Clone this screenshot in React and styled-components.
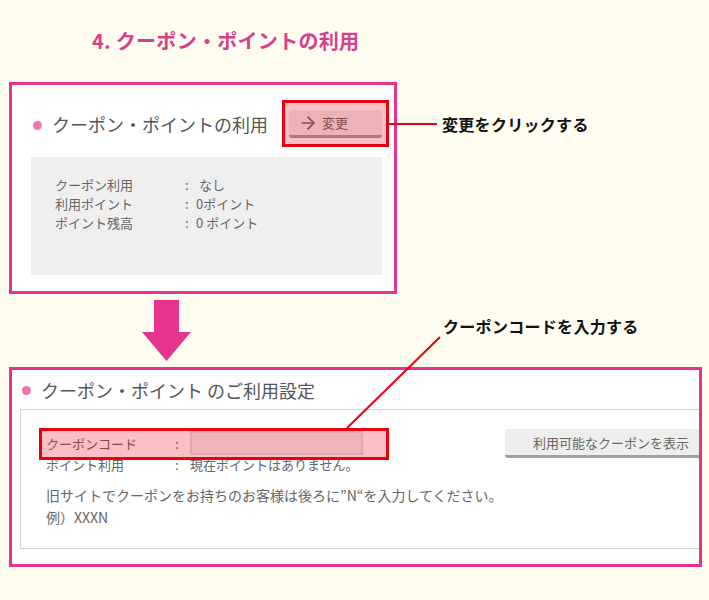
import styled, { createGlobalStyle } from 'styled-components'
import { ArrowRight } from 'lucide-react'

const PINK = '#E6338B'
const RED = '#E60012'

const GlobalStyle = createGlobalStyle`
  html, body {
    margin: 0;
    padding: 0;
    background: #FFFDEF;
  }
  body {
    font-family: "Noto Sans CJK JP", "Noto Sans", sans-serif;
    color: #555;
  }
`

const Page = styled.div`
  position: relative;
  width: 709px;
  height: 600px;
  padding-top: 29px;
  box-sizing: border-box;
`

const Title = styled.h2`
  margin: 0 0 29px 92px;
  font-size: 20px;
  line-height: 24px;
  font-weight: 700;
  letter-spacing: 0.3px;
  color: #D63F8C;
`

const Row = styled.div`
  display: flex;
  align-items: flex-start;
`

const Frame = styled.section`
  box-sizing: border-box;
  flex-shrink: 0;
  width: ${p => p.$w}px;
  height: ${p => p.$h}px;
  margin-left: 9px;
  border: 3px solid ${PINK};
  background: #fff;
  overflow: hidden;
`

const FirstFrame = styled(Frame)`
  padding: 25px 12px 0 19px;
`

const SecondFrame = styled(Frame)`
  padding: 0 0 0 8px;
`

const Head = styled.div`
  display: flex;
  align-items: center;
  height: ${p => p.$h}px;
  padding-left: 2px;
`

const Dot = styled.span`
  flex-shrink: 0;
  width: 9px;
  height: 9px;
  margin: 2px 10px 0 0;
  border-radius: 50%;
  background: #F074AE;
`

const HeadText = styled.h3`
  margin: 0;
  font-size: 18px;
  line-height: 24px;
  font-weight: 400;
  color: #555;
  white-space: nowrap;
`

const Callout = styled.div`
  margin-left: ${p => p.$left}px;
  margin-top: ${p => p.$top}px;
  font-size: 16px;
  line-height: 22px;
  font-weight: 700;
  letter-spacing: 0.3px;
  color: #111;
  white-space: nowrap;
`

/* red translucent marker drawn over the thing to click */
const Marker = styled.span`
  position: absolute;
  z-index: 1;
  box-sizing: border-box;
  top: ${p => p.$top}px;
  left: ${p => p.$left}px;
  width: ${p => p.$w}px;
  height: ${p => p.$h}px;
  border: 3px solid ${RED};
  background: rgba(230, 0, 18, 0.25);
  pointer-events: none;
`

const ButtonWrap = styled.div`
  position: relative;
  margin-left: auto;
  display: flex;
`

const GreyButton = styled.button`
  display: flex;
  align-items: center;
  justify-content: ${p => (p.$center ? 'center' : 'flex-start')};
  gap: 4px;
  box-sizing: border-box;
  width: ${p => p.$w}px;
  height: ${p => p.$h}px;
  padding: 0 0 0 ${p => (p.$center ? 0 : 9)}px;
  margin: 0;
  border: none;
  border-bottom: 3px solid #A0A0A0;
  border-radius: 3px;
  background: #EEEEEE;
  color: #666;
  font-family: inherit;
  font-size: 13px;
  line-height: 19px;
  flex-shrink: 0;
`

const InfoPanel = styled.div`
  box-sizing: border-box;
  height: 118px;
  margin-top: 19px;
  padding: 18px 0 0 24px;
  background: #EFEFEF;
`

const InfoRow = styled.div`
  display: grid;
  grid-template-columns: 130px 11px 1fr;
  font-size: 13px;
  line-height: 19px;
  color: #666;
`

const FormPanel = styled.div`
  box-sizing: border-box;
  display: flex;
  align-items: flex-start;
  width: 700px;
  height: 140px;
  padding: 21px 0 0 25px;
  border: 1px solid #D3D3D3;
`

const FormCol = styled.div`
  width: 459px;
  flex-shrink: 0;
`

const FormRow = styled.div`
  position: relative;
  display: grid;
  grid-template-columns: 129px 15px 1fr;
  align-items: center;
  height: ${p => p.$h}px;
  font-size: 13px;
  line-height: 19px;
  color: #666;
`

const CodeInput = styled.input`
  box-sizing: border-box;
  width: 173px;
  height: 24px;
  margin: 0;
  border: 2px solid #DEDEDE;
  background: #F2F2F2;
`

const Note = styled.p`
  margin: 10px 0 0;
  font-size: 14px;
  line-height: 22px;
  color: #666;
`

const SideButton = styled(GreyButton)`
  margin-top: -2px;
`

const Lines = styled.svg`
  position: absolute;
  top: 0;
  left: 0;
  z-index: 2;
  pointer-events: none;
`

function DownArrow() {
  return (
    <svg width="49" height="61" viewBox="0 0 49 61" style={{ marginLeft: 142, marginTop: 6, flexShrink: 0 }}>
      <polygon points="12,0 37,0 37,32 49,32 24.5,61 0,32 12,32" fill={PINK} />
    </svg>
  )
}

const current = [
  ['クーポン利用', '\u00a0なし'],
  ['利用ポイント', '0ポイント'],
  ['ポイント残高', '0 ポイント'],
]

export default function App() {
  return (
    <Page>
      <GlobalStyle />
      <Title>4. クーポン・ポイントの利用</Title>

      <Row>
        <FirstFrame $w={388} $h={212}>
          <Head $h={28}>
            <Dot />
            <HeadText>クーポン・ポイントの利用</HeadText>
            <ButtonWrap>
              <GreyButton $w={93} $h={28}>
                <ArrowRight size={20} strokeWidth={2} />
                変更
              </GreyButton>
              <Marker $top={-10} $left={-7} $w={107} $h={47} />
            </ButtonWrap>
          </Head>
          <InfoPanel>
            {current.map(([k, v]) => (
              <InfoRow key={k}>
                <span>{k}</span>
                <span>:</span>
                <span>{v}</span>
              </InfoRow>
            ))}
          </InfoPanel>
        </FirstFrame>
        <Callout $left={45} $top={31}>変更をクリックする</Callout>
      </Row>

      <Row style={{ height: 73 }}>
        <DownArrow />
        <Callout $left={252} $top={21}>クーポンコードを入力する</Callout>
      </Row>

      <SecondFrame $w={693} $h={200}>
        <Head $h={39}>
          <Dot />
          <HeadText>クーポン・ポイント のご利用設定</HeadText>
        </Head>
        <FormPanel>
          <FormCol>
            <FormRow $h={24}>
              <span>クーポンコード</span>
              <span>:</span>
              <CodeInput type="text" />
              <Marker $top={-3} $left={-7} $w={350} $h={32} />
            </FormRow>
            <FormRow $h={19}>
              <span>ポイント利用</span>
              <span>:</span>
              <span>現在ポイントはありません。</span>
            </FormRow>
            <Note>
              旧サイトでクーポンをお持ちのお客様は後ろに”N“を入力してください。
              <br />
              例）XXXN
            </Note>
          </FormCol>
          <SideButton $w={212} $h={29} $center>利用可能なクーポンを表示</SideButton>
        </FormPanel>
      </SecondFrame>

      <Lines width="709" height="600">
        <line x1="389" y1="124" x2="437" y2="124" stroke={RED} strokeWidth="2" />
        <line x1="440" y1="337" x2="347" y2="428" stroke={RED} strokeWidth="2" />
      </Lines>
    </Page>
  )
}
